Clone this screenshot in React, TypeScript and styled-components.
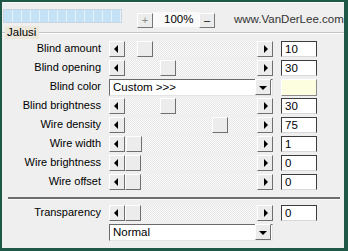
import React from 'react';
import styled, { createGlobalStyle } from 'styled-components';

type SliderRow = { label: string; value: number };

const TOP_ROWS: SliderRow[] = [
    { label: 'Blind amount', value: 10 },
    { label: 'Blind opening', value: 30 },
];

const BOTTOM_ROWS: SliderRow[] = [
    { label: 'Blind brightness', value: 30 },
    { label: 'Wire density', value: 75 },
    { label: 'Wire width', value: 1 },
    { label: 'Wire brightness', value: 0 },
    { label: 'Wire offset', value: 0 },
];

const THUMB_TRAVEL = 116;

const Slider: React.FC<{ value: number }> = ({ value }) => (
    <Track>
        <ArrowButton>
            <LeftArrow />
        </ArrowButton>
        <Lane>
            <Thumb style={{ marginLeft: Math.round((value / 100) * THUMB_TRAVEL) }} />
        </Lane>
        <ArrowButton>
            <RightArrow />
        </ArrowButton>
    </Track>
);

const Row: React.FC<SliderRow> = ({ label, value }) => (
    <>
        <Label>{label}</Label>
        <Slider value={value} />
        <ValueBox>{value}</ValueBox>
    </>
);

const Dropdown: React.FC<{ text: string }> = ({ text }) => (
    <Select>
        <SelectText>{text}</SelectText>
        <ArrowButton>
            <DownArrow />
        </ArrowButton>
    </Select>
);

const App: React.FC = () => {
    return (
        <>
            <GlobalStyle />
            <Panel>
                <TopBar>
                    <Progress />
                    <SmallButton muted>+</SmallButton>
                    <Zoom>100%</Zoom>
                    <SmallButton>–</SmallButton>
                    <Url>www.VanDerLee.com</Url>
                </TopBar>
                <Group>
                    <Legend>Jalusi</Legend>
                    <Grid>
                        {TOP_ROWS.map((r) => (
                            <Row key={r.label} {...r} />
                        ))}
                        <Label>Blind color</Label>
                        <Dropdown text="Custom >>>" />
                        <Swatch />
                        {BOTTOM_ROWS.map((r) => (
                            <Row key={r.label} {...r} />
                        ))}
                    </Grid>
                </Group>
                <Separator />
                <Grid top={5}>
                    <Row label="Transparency" value={0} />
                    <span />
                    <Dropdown text="Normal" />
                </Grid>
            </Panel>
        </>
    );
};

const GlobalStyle = createGlobalStyle`
    html, body {
        margin: 0;
        padding: 0;
        background: #1f5847;
    }
    body {
        width: 348px;
        height: 251px;
        overflow: hidden;
        font-family: 'Liberation Sans', Arial, sans-serif;
        font-size: 11px;
        color: #000;
    }
`;

const Panel = styled.div`
    margin: 2px 4px 3px 2px;
    width: 342px;
    height: 246px;
    background: #efefef;
    border-top: 1px solid #fbfbfb;
    box-sizing: border-box;
`;

const TopBar = styled.div`
    display: flex;
    align-items: flex-start;
    height: 23px;
    padding-left: 1px;
`;

const Progress = styled.div`
    margin-top: 6px;
    width: 117px;
    height: 12px;
    border: 1px solid #c9d6e0;
    background: repeating-linear-gradient(90deg, #c4e1f6 0 8px, #e6f1fa 8px 9px);
`;

const SmallButton = styled.div<{ muted?: boolean }>`
    margin: 10px 0 0 ${(p) => (p.muted ? 15 : 0)}px;
    width: 14px;
    height: 13px;
    border: 1px solid;
    border-color: #fff #777 #777 #fff;
    background: #ececec;
    display: flex;
    align-items: center;
    justify-content: center;
    font-size: 11px;
    line-height: 13px;
    color: ${(p) => (p.muted ? '#8a8a8a' : '#000')};
`;

const Zoom = styled.div`
    margin-top: 9px;
    width: 46px;
    height: 15px;
    padding-left: 11px;
    box-sizing: border-box;
    background: #fafafa;
    font-size: 11.5px;
    line-height: 15px;
`;

const Url = styled.div`
    margin: 9px 0 0 19px;
    font-size: 11.5px;
    line-height: 15px;
    color: #333;
`;

const Group = styled.fieldset`
    margin: 0;
    padding: 0 0 7px;
    border: none;
    border-top: 1px solid #c4c4c4;
    box-shadow: inset 0 1px #fff;
`;

const Legend = styled.legend`
    margin-left: 3px;
    padding: 0 3px 0 2px;
    background: #ebe7da;
    font-size: 11.5px;
    line-height: 13px;
`;

const Grid = styled.div<{ top?: number }>`
    display: grid;
    grid-template-columns: 99px 164px 36px;
    grid-auto-rows: 16px;
    column-gap: 8px;
    row-gap: 3px;
    padding-top: ${(p) => p.top ?? 2}px;
    align-items: center;
`;

const Label = styled.div`
    text-align: right;
    line-height: 13px;
    padding-bottom: 2px;
    white-space: nowrap;
`;

const Track = styled.div`
    display: flex;
    height: 16px;
    background: repeating-conic-gradient(#fbfbfb 0 25%, #e6e6e6 0 50%) 0 0 / 2px 2px;
`;

const Lane = styled.div`
    flex: 1;
    display: flex;
`;

const ButtonFace = styled.div`
    box-sizing: border-box;
    width: 16px;
    height: 16px;
    border: 1px solid;
    border-color: #fff #6f6f6f #6f6f6f #fff;
    background: #ececec;
`;

const Thumb = styled(ButtonFace)`
    flex: none;
`;

const ArrowButton = styled(ButtonFace)`
    flex: none;
    display: flex;
    align-items: center;
    justify-content: center;
`;

const LeftArrow = styled.span`
    width: 0;
    height: 0;
    margin-right: 2px;
    border-top: 4px solid transparent;
    border-bottom: 4px solid transparent;
    border-right: 4px solid #000;
`;

const RightArrow = styled.span`
    width: 0;
    height: 0;
    margin-left: 1px;
    border-top: 4px solid transparent;
    border-bottom: 4px solid transparent;
    border-left: 4px solid #000;
`;

const DownArrow = styled.span`
    width: 0;
    height: 0;
    margin-top: 1px;
    border-left: 4px solid transparent;
    border-right: 4px solid transparent;
    border-top: 4px solid #000;
`;

const ValueBox = styled.div`
    box-sizing: border-box;
    height: 16px;
    padding-left: 3px;
    background: #fff;
    border: 1px solid;
    border-color: #3c3c3c #3c3c3c #d9d9d9 #3c3c3c;
    font-size: 11.5px;
    line-height: 14px;
`;

const Select = styled.div`
    box-sizing: border-box;
    height: 17px;
    display: flex;
    align-items: center;
    background: #fff;
    border: 1px solid;
    border-color: #6a6a6a #e4e4e4 #e4e4e4 #6a6a6a;
    padding-right: 1px;
`;

const SelectText = styled.span`
    flex: 1;
    padding-left: 3px;
    font-size: 11.5px;
    line-height: 14px;
`;

const Swatch = styled.div`
    box-sizing: border-box;
    height: 17px;
    background: #fdfde0;
    border: 1px solid;
    border-color: #fff #8a8a8a #8a8a8a #fff;
`;

const Separator = styled.div`
    margin: 0 4px 0 6px;
    height: 2px;
    background: #6e6e6e;
    border-bottom: 1px solid #fafafa;
`;

export default App;
